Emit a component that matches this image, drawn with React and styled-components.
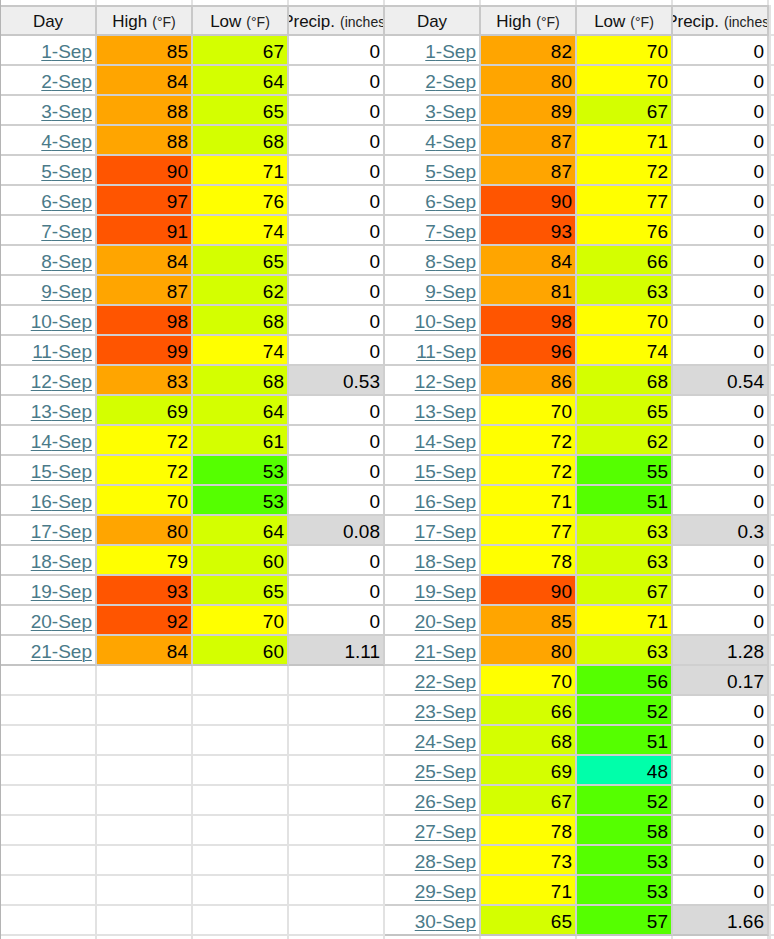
import React from 'react';
import styled, { createGlobalStyle } from 'styled-components';

const leftDays = [
  [85, 67, 0], [84, 64, 0], [88, 65, 0], [88, 68, 0], [90, 71, 0], [97, 76, 0],
  [91, 74, 0], [84, 65, 0], [87, 62, 0], [98, 68, 0], [99, 74, 0], [83, 68, 0.53],
  [69, 64, 0], [72, 61, 0], [72, 53, 0], [70, 53, 0], [80, 64, 0.08], [79, 60, 0],
  [93, 65, 0], [92, 70, 0], [84, 60, 1.11],
];

const rightDays = [
  [82, 70, 0], [80, 70, 0], [89, 67, 0], [87, 71, 0], [87, 72, 0], [90, 77, 0],
  [93, 76, 0], [84, 66, 0], [81, 63, 0], [98, 70, 0], [96, 74, 0], [86, 68, 0.54],
  [70, 65, 0], [72, 62, 0], [72, 55, 0], [71, 51, 0], [77, 63, 0.3], [78, 63, 0],
  [90, 67, 0], [85, 71, 0], [80, 63, 1.28], [70, 56, 0.17], [66, 52, 0], [68, 51, 0],
  [69, 48, 0], [67, 52, 0], [78, 58, 0], [73, 53, 0], [71, 53, 0], [65, 57, 1.66],
];

// colour scale used for both high and low temperatures
const tempColor = (t) => {
  if (t >= 90) return '#ff5500';
  if (t >= 80) return '#ffa500';
  if (t >= 70) return '#ffff00';
  if (t >= 60) return '#d4ff00';
  if (t >= 50) return '#55ff00';
  return '#00ffaa';
};

const GlobalStyle = createGlobalStyle`
  body {
    margin: 0;
    background: #ffffff;
    font-family: "Liberation Sans", Arial, sans-serif;
  }
`;

const Page = styled.div`
  width: 774px;
  height: 939px;
  overflow: hidden;
  display: flex;
  flex-direction: column;
  border-left: 1px solid #b4b4b4;
  box-sizing: border-box;
`;

const Strip = styled.div`
  height: 5px;
  flex-shrink: 0;
  display: grid;
  grid-template-columns: repeat(8, 96px) 1fr;
`;

const StripCell = styled.div`
  border-right: 2px solid #e2e2e2;
`;

const Sheets = styled.div`
  display: flex;
  flex: 1;
  min-height: 0;
  overflow: hidden;
`;

const Sheet = styled.div`
  width: 384px;
  flex-shrink: 0;
  display: flex;
  flex-direction: column;
`;

const Filler = styled.div`
  flex: 1;
  display: flex;
  flex-direction: column;
`;

const FillerRow = styled.div`
  height: ${(p) => p.$h || 30}px;
  flex-shrink: 0;
  box-sizing: border-box;
  border-bottom: 2px solid #e2e2e2;
  border-left: 2px solid #e2e2e2;
`;

const Row = styled.div`
  display: grid;
  grid-template-columns: repeat(4, 96px);
  height: 30px;
  flex-shrink: 0;
`;

const HeaderRow = styled(Row)`
  height: 31px;
  border-top: 2px solid #c8c8c8;
  box-sizing: border-box;
`;

const HeadCell = styled.div`
  box-sizing: border-box;
  background: #eeeeee;
  border-right: 2px solid #c8c8c8;
  border-bottom: 2px solid #c8c8c8;
  display: flex;
  align-items: center;
  justify-content: center;
  padding-top: 3px;
  overflow: hidden;
  white-space: nowrap;
  font-size: 17px;
  color: #111;
`;

const Unit = styled.span`
  font-size: 14px;
  margin-left: 5px;
  color: #222;
`;

const Cell = styled.div`
  box-sizing: border-box;
  background: ${(p) => p.$bg || '#ffffff'};
  border-right: 2px solid ${(p) => (p.$empty ? '#e2e2e2' : '#cfcfcf')};
  border-bottom: 2px solid ${(p) => (p.$last ? '#c4c4c4' : p.$empty ? '#e2e2e2' : '#cfcfcf')};
  display: flex;
  align-items: center;
  justify-content: flex-end;
  padding: 3px 3px 0 0;
  font-size: 19px;
  color: #000;
  white-space: nowrap;
`;

const DateLink = styled.a`
  color: #4a7a89;
  text-decoration: underline;
  text-underline-offset: 2px;
  text-decoration-thickness: 1px;
`;

function Header() {
  return (
    <HeaderRow>
      <HeadCell>Day</HeadCell>
      <HeadCell>High<Unit>(°F)</Unit></HeadCell>
      <HeadCell>Low<Unit>(°F)</Unit></HeadCell>
      <HeadCell>Precip.<Unit>(inches)</Unit></HeadCell>
    </HeaderRow>
  );
}

function Table({ days, emptyRows }) {
  return (
    <Sheet>
      <Header />
      {days.map(([high, low, rain], i) => {
        const last = i === days.length - 1;
        return (
          <Row key={i}>
            <Cell $last={last}>
              <DateLink>{i + 1}-Sep</DateLink>
            </Cell>
            <Cell $last={last} $bg={tempColor(high)}>{high}</Cell>
            <Cell $last={last} $bg={tempColor(low)}>{low}</Cell>
            <Cell $last={last} $bg={rain > 0 ? '#d9d9d9' : undefined}>{rain}</Cell>
          </Row>
        );
      })}
      {Array.from({ length: emptyRows }).map((_, i) => (
        <Row key={`e${i}`}>
          <Cell $empty />
          <Cell $empty />
          <Cell $empty />
          <Cell $empty />
        </Row>
      ))}
    </Sheet>
  );
}

export default function App() {
  return (
    <>
      <GlobalStyle />
      <Page>
        <Strip>
          {Array.from({ length: 8 }).map((_, i) => (
            <StripCell key={i} />
          ))}
        </Strip>
        <Sheets>
          <Table days={leftDays} emptyRows={11} />
          <Table days={rightDays} emptyRows={2} />
          <Filler>
            <FillerRow $h={31} />
            {Array.from({ length: 32 }).map((_, i) => (
              <FillerRow key={i} />
            ))}
          </Filler>
        </Sheets>
      </Page>
    </>
  );
}
